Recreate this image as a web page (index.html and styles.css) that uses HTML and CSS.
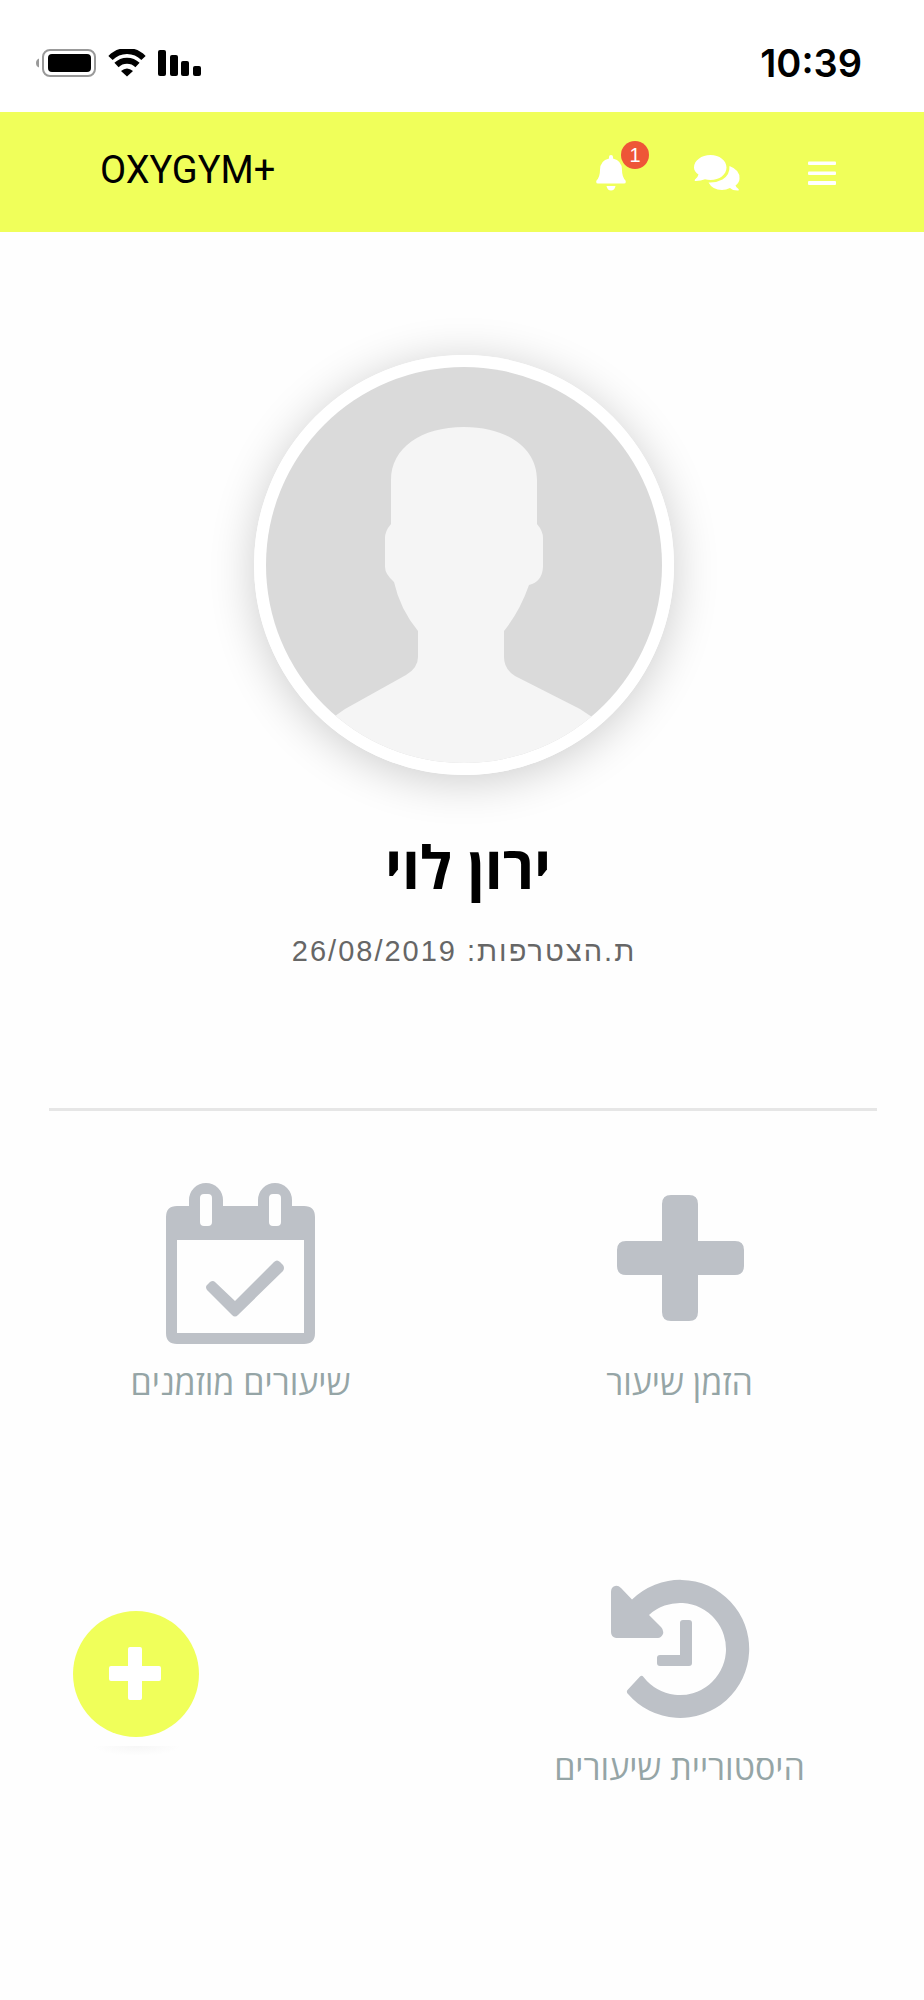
FILE: index.html
```html
<!DOCTYPE html>
<html lang="he" dir="rtl">
<head>
  <meta charset="UTF-8" />
  <meta name="viewport" content="width=device-width, initial-scale=1.0"/>
  <title>OXYGYM+</title>

  <link rel="stylesheet" href="styles.css">
</head>
<body>
  <div class="status-bar">
    <span class="time">10:39</span>
    <div class="status-icons">
      <svg width="44" height="28" viewBox="0 0 44 28">
        <rect x="0" y="1" width="8" height="26" rx="2"/>
        <rect x="12" y="6" width="8" height="21" rx="2"/>
        <rect x="23" y="12" width="8" height="15" rx="2"/>
        <rect x="35" y="17" width="8" height="10" rx="2"/>
      </svg>
      <svg width="38" height="28" viewBox="0 0 38 28">
        <path d="M2.500 9a23 23 0 0 1 33 0" fill="none" stroke="#000" stroke-width="6"/>
        <path d="M8.500 16a15 15 0 0 1 21 0" fill="none" stroke="#000" stroke-width="6"/>
        <path d="M13 22q6-5 12 0l-6 5.500z"/>
      </svg>
      <svg width="60" height="28" viewBox="0 0 60 28">
        <path d="M3 9.500v9q-3-1-3-4.500t3-4.500z" fill="#999"/>
        <rect x="7" y="1" width="52" height="26" rx="7" fill="none" stroke="#999" stroke-width="2"/>
        <rect x="12" y="5" width="43" height="18" rx="4"/>
      </svg>
    </div>
  </div>

  <header class="navbar">
    <div class="nav-actions">
      <button class="nav-btn" type="button" aria-label="תפריט">
        <svg width="28" height="36" viewBox="0 0 28 36">
          <rect x="0" y="6.500" width="28" height="3.500" rx="1"/>
          <rect x="0" y="16.500" width="28" height="3.500" rx="1"/>
          <rect x="0" y="26" width="28" height="4" rx="1"/>
        </svg>
      </button>
      <button class="nav-btn" type="button" aria-label="הודעות">
        <svg width="46" height="36" viewBox="0 0 46 36">
          <path d="M16.500 0C25.500 0 32.500 5.500 32.500 12.500S25.500 25 16.500 25q-3 0-5.500-.7Q7 26 2 26q-2 0-1-1.500Q4 22 4.500 19.500 0 16.500 0 12.500C0 5.500 7.500 0 16.500 0z"/>
          <path d="M35.500 11Q46 15 45.500 23.500q0 4-4 7 .5 1.500 3 3.500 1 1.500-1 1.500-5 0-7.500-2.500Q32 35 28 35q-9.500 0-13.500-7.500Q22 28 28.500 24.500 36 20 35.500 11z"/>
        </svg>
      </button>
      <button class="nav-btn" type="button" aria-label="התראות">
        <svg width="30" height="36" viewBox="0 0 30 36">
          <path d="M15 0q2 0 2 2v1.500Q26 5.500 26 15q0 7 3.500 10.500 1 3-1.500 3H2q-2.500 0-1.500-3Q4 22 4 15 4 5.500 13 3.500V2q0-2 2-2z"/>
          <path d="M10.500 31h9q-1 4.500-4.500 4.500T10.500 31z"/>
        </svg>
        <span class="badge">1</span>
      </button>
    </div>
    <a class="brand" href="#" dir="ltr">OXYGYM+</a>
  </header>

  <main>
    <section class="profile">
      <svg class="avatar" viewBox="0 0 396 396" role="img" aria-label="ירון לוי">
        <rect width="396" height="396" fill="#dadada"/>
        <path fill="#f5f5f5" d="M198 60C241 60 271 81 271 113V157Q277 164 277 171V200Q276 215 263 218Q254 244 238 264V290Q238 302 249 309L314 342L332 354V396H62V354L79 342L140 308Q152 301 152 290V264Q134 242 128 215Q119 207 119 200V171Q119 164 125 157V113C125 81 155 60 198 60z"/>
      </svg>
      <h1>ירון לוי</h1>
      <p class="joined">ת.הצטרפות: 26/08/2019</p>
    </section>

    <hr>

    <nav class="tiles">
      <a class="tile" href="#">
        <svg width="180" height="180" viewBox="0 0 180 180">
          <path d="M81 25h18q9 0 9 9v37h37q9 0 9 9v16q0 9-9 9h-37v37q0 9-9 9H81q-9 0-9-9v-37H36q-9 0-9-9V80q0-9 9-9h36V34q0-9 9-9z"/>
        </svg>
        <span>הזמן שיעור</span>
      </a>
      <a class="tile" href="#">
        <svg width="180" height="180" viewBox="0 0 180 180">
          <path fill-rule="evenodd" d="M26 36H38V30a17 17 0 0 1 34 0V36H107V30a17 17 0 0 1 34 0V36H153q11 0 11 11V163q0 11-11 11H26q-11 0-11-11V47q0-11 11-11zM26 70V163H153V70zM53 24q-4 0-4 4v24q0 4 4 4h4q4 0 4-4V28q0-4-4-4zM122 24q-4 0-4 4v24q0 4 4 4h4q4 0 4-4V28q0-4-4-4z"/>
          <path d="M64 112L84 131L123 92Q126 89 129 92L132 95Q134 98 132 101L87 145Q84 148 81 145L56 120Q54 117 56 115L59 112Q62 110 64 112z"/>
        </svg>
        <span>שיעורים מוזמנים</span>
      </a>
      <a class="tile" href="#">
        <svg width="180" height="180" viewBox="0 0 180 180">
          <path d="M42 44.500A69 69 0 1 1 38 139Q36 137 37.500 135L50 121.500Q52 120 53.500 122A46 46 0 1 0 59 60L71 72Q74 75 73 79 71 83 68 83H26Q21 82 21 77V37Q21 32 25 31 28 30 31 33z"/>
          <path d="M93 65h6q3 0 3 3v40q0 3-3 3H70q-3 0-3-3v-5q0-3 3-3h20V68q0-3 3-3z"/>
        </svg>
        <span>היסטוריית שיעורים</span>
      </a>
    </nav>
  </main>

  <button class="fab" type="button" aria-label="הוספה">
    <svg width="54" height="54" viewBox="0 0 54 54">
      <path d="M21 0h10q2 0 2 2v17h17q2 0 2 2v11q0 2-2 2H33v17q0 2-2 2H21q-2 0-2-2V34H2q-2 0-2-2V21q0-2 2-2h17V2q0-2 2-2z"/>
    </svg>
  </button>
</body>
</html>
```

FILE: styles.css
```css
* {
  box-sizing: border-box;
}
body {
  margin: 0;
  font-family: "Open Sans", "Liberation Sans", sans-serif;
  background: #fefefe;
  color: #000;
}
button {
  border: none;
  padding: 0;
  cursor: pointer;
}
a {
  text-decoration: none;
}
svg {
  display: block;
}
.status-bar {
  display: flex;
  justify-content: space-between;
  align-items: center;
  height: 112px;
  padding: 14px 62px 0 36px;
  background: #fff;
}
.time {
  font-family: Inter, sans-serif;
  font-size: 38px;
  font-weight: 600;
}
.status-icons {
  display: flex;
  gap: 12px;
}
.navbar {
  display: flex;
  justify-content: space-between;
  align-items: center;
  height: 120px;
  padding: 2px 88px 0 100px;
  background: #f0ff5a;
}
.nav-actions {
  display: flex;
  gap: 68px;
}
.nav-btn {
  position: relative;
  background: none;
}
.nav-btn svg {
  fill: #fff;
}
.badge {
  position: absolute;
  top: -14px;
  left: 25px;
  width: 28px;
  height: 28px;
  border-radius: 50%;
  background: #ee5637;
  color: #fff;
  font-family: "Liberation Sans", sans-serif;
  font-size: 20px;
  line-height: 28px;
}
.brand {
  margin-bottom: 6px;
  font-family: Roboto, sans-serif;
  font-size: 38px;
  line-height: 44px;
  color: #000;
}
.profile {
  padding: 123px 20px 0 24px;
  text-align: center;
}
.avatar {
  width: 420px;
  height: 420px;
  margin: 0 auto;
  border: 12px solid #fff;
  border-radius: 50%;
  box-shadow: 0 6px 46px rgba(0, 0, 0, 0.2);
}
h1 {
  margin: 51px 0 0;
  padding-left: 8px;
  font-size: 59px;
  line-height: 80px;
}
.joined {
  margin: 29px 0 0;
  font-family: "Liberation Sans", sans-serif;
  font-size: 29px;
  line-height: 32px;
  letter-spacing: 2px;
  color: #666;
}
hr {
  margin: 141px 47px 0 49px;
  border: none;
  border-top: 3px solid #e6e6e6;
}
.tiles {
  display: grid;
  grid-template-columns: 1fr 1fr;
  row-gap: 149px;
  padding: 59px 25px 150px 21px;
}
.tile {
  display: flex;
  flex-direction: column;
  align-items: center;
  gap: 8px;
  color: #95a5a6;
  font-size: 34px;
  line-height: 48px;
}
.tile svg {
  fill: #bdc1c7;
}
/* floating add button */
.fab {
  position: absolute;
  top: 1611px;
  left: 73px;
  display: flex;
  justify-content: center;
  align-items: center;
  width: 126px;
  height: 126px;
  border-radius: 50%;
  background: #f0ff5a;
}
.fab svg {
  fill: #fff;
}
.fab::after {
  content: "";
  position: absolute;
  top: 135px;
  left: 20px;
  width: 88px;
  height: 10px;
  background: radial-gradient(ellipse at top, #f6f6f6, #fefefe 70%);
}
```
